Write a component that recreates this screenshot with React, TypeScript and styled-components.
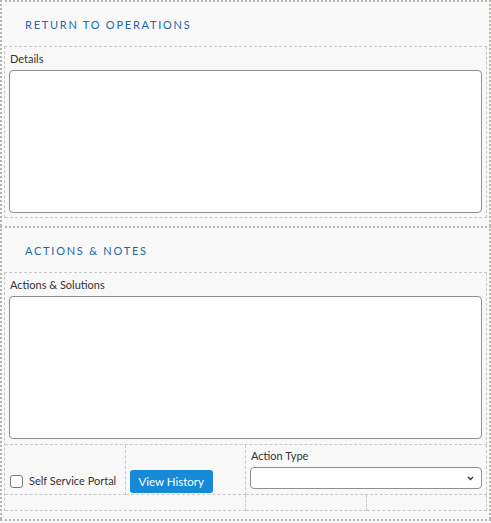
import React from "react"
import styled, { createGlobalStyle } from "styled-components"

const GlobalStyle = createGlobalStyle`
  html, body {
    margin: 0;
    padding: 0;
    background: #f8f8f8;
  }
  body {
    font-family: Lato, "Open Sans", sans-serif;
    color: #333;
  }
`

const Page = styled.div`
  width: 491px;
  box-sizing: border-box;
`

const Section = styled.section`
  border: 2px dotted #b5b5ad;
  border-bottom: none;
  background: #f8f8f8;
  padding: 0 2px 8px;
`

const SectionTitle = styled.h3`
  margin: 0;
  height: 44px;
  display: flex;
  align-items: center;
  padding-left: 21px;
  font-size: 11px;
  font-weight: 400;
  letter-spacing: 1.75px;
  text-transform: uppercase;
  color: #2268a6;
`

const Panel = styled.div`
  display: grid;
  grid-template-columns: repeat(4, 1fr);
  border-top: 1px dashed #c8c8c8;
  border-left: 1px dashed #c8c8c8;
`

const Cell = styled.div<{ $span?: number; $end?: boolean; $pad?: string }>`
  grid-column: span ${p => p.$span ?? 1};
  border-right: 1px dashed #c8c8c8;
  border-bottom: 1px dashed #c8c8c8;
  padding: ${p => p.$pad ?? "4px 4px"};
  min-height: 16px;
  box-sizing: border-box;
  display: flex;
  flex-direction: column;
  justify-content: ${p => (p.$end ? "flex-end" : "flex-start")};
`

const Label = styled.label`
  display: block;
  font-size: 11px;
  line-height: 16px;
  color: #333;
  margin: 0 0 3px 1px;
  white-space: nowrap;
`

const TextArea = styled.textarea`
  display: block;
  width: 100%;
  height: 143px;
  box-sizing: border-box;
  border: 1px solid #8f8f8f;
  border-radius: 4px;
  background: #fff;
  resize: none;
  margin: 0;
`

const CheckRow = styled.label`
  display: flex;
  align-items: center;
  gap: 6px;
  font-size: 11px;
  line-height: 16px;
  color: #333;
  white-space: nowrap;
  margin: 0 0 0 1px;
`

const Box = styled.span`
  flex: none;
  width: 11px;
  height: 11px;
  border: 1px solid #777;
  border-radius: 3px;
  background: #fff;
`

const Button = styled.button`
  align-self: flex-start;
  height: 23px;
  padding: 0 9px;
  border: none;
  border-radius: 3px;
  background: #168ad6;
  color: #fff;
  font-family: Lato, sans-serif;
  font-size: 11.5px;
  cursor: pointer;
`

const Select = styled.div`
  height: 22px;
  box-sizing: border-box;
  border: 1px solid #8f8f8f;
  border-radius: 4px;
  background: #fff;
  display: flex;
  align-items: center;
  justify-content: flex-end;
  padding-right: 7px;
`

const Empty = styled.div`
  height: 1px;
`

export default function App() {
  return (
    <Page>
      <GlobalStyle />
      <Section>
        <SectionTitle>Return to Operations</SectionTitle>
        <Panel>
          <Cell $span={4}>
            <Label>Details</Label>
            <TextArea />
          </Cell>
        </Panel>
      </Section>
      <Section>
        <SectionTitle>Actions &amp; Notes</SectionTitle>
        <Panel>
          <Cell $span={4} $pad="4px 4px 5px">
            <Label>Actions &amp; Solutions</Label>
            <TextArea />
          </Cell>
          <Cell $end $pad="3px 4px 5px">
            <CheckRow>
              <Box />
              Self Service Portal
            </CheckRow>
          </Cell>
          <Cell $end $pad="3px 4px 1px">
            <Button>View History</Button>
          </Cell>
          <Cell $span={2} $pad="3px 4px 5px">
            <Label>Action Type</Label>
            <Select>
              <svg width="7" height="5" viewBox="0 0 7 5">
                <path d="M1 1l2.5 2.5L6 1" stroke="#333" strokeWidth="1.4" fill="none" />
              </svg>
            </Select>
          </Cell>
          <Cell $span={2} $pad="0" />
          <Cell $pad="0" />
          <Cell $pad="0" />
        </Panel>
      </Section>
      <Section>
        <Empty />
      </Section>
    </Page>
  )
}
